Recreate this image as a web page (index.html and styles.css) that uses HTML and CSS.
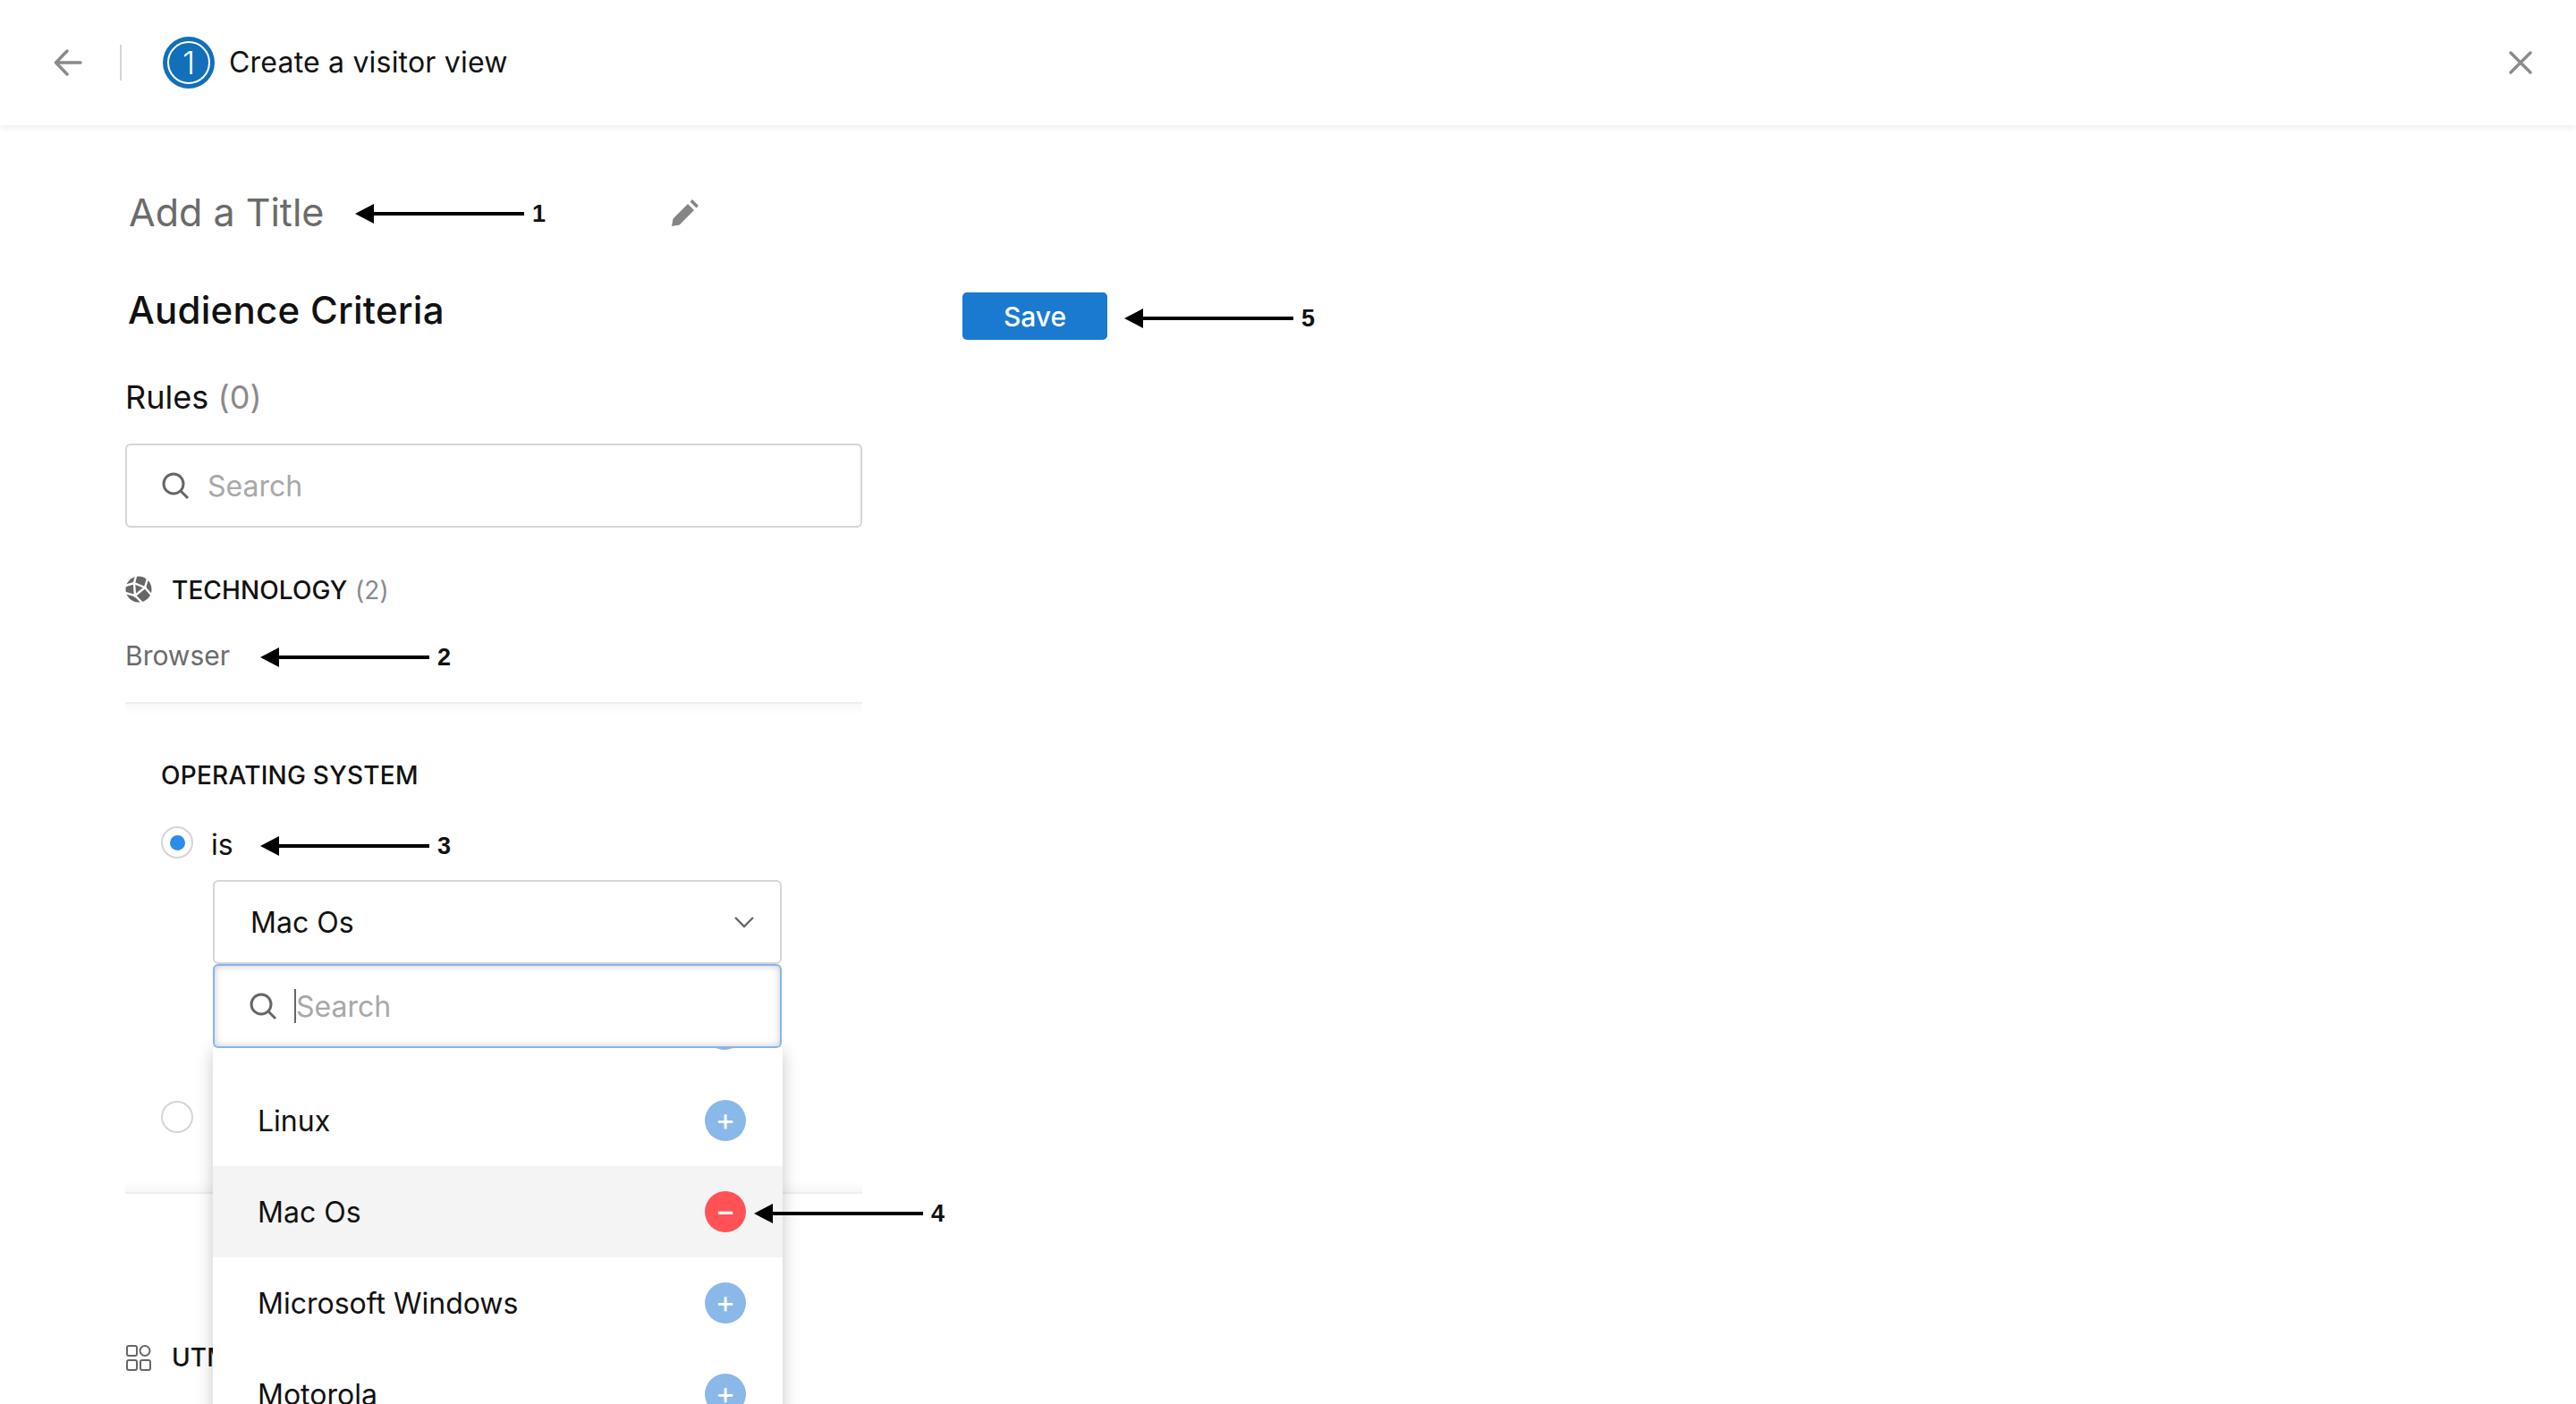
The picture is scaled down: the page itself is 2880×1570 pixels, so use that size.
FILE: index.html
```html
<!DOCTYPE html>
<html lang="en">
<head>
<meta charset="utf-8">
<title>Create a visitor view</title>
<link rel="stylesheet" href="styles.css">
</head>
<body>
<header class="topbar">
  <svg class="back" width="32" height="30" viewBox="0 0 32 30"><path d="M30 15H3M15 2 2.500 15 15 28" fill="none" stroke="#8a8a8a" stroke-width="3.400" stroke-linecap="round" stroke-linejoin="round"/></svg>
  <span class="bar-sep"></span>
  <span class="step"><span class="step-inner">1</span></span>
  <span class="bar-title">Create a visitor view</span>
  <svg class="close" width="26" height="26" viewBox="0 0 26 26"><path d="M2 2 24 24M24 2 2 24" fill="none" stroke="#8a8a8a" stroke-width="3.400" stroke-linecap="round"/></svg>
</header>

<main class="page">
  <div class="title-row">
    <span class="title">Add a Title</span>
    <svg width="32" height="32" viewBox="0 0 32 32"><path d="M1 31 2.500 22.500 19 6 26 13 9.500 29.500Z M21.500 3.500 24 1 31 8 28.500 10.500Z" fill="#858585"/></svg>
  </div>
  <div class="criteria-row">
    <h1 class="criteria">Audience Criteria</h1>
    <button class="save">Save</button>
  </div>
  <h2 class="rules">Rules <span class="muted">(0)</span></h2>
  <div class="field search-main">
    <svg class="lens" width="32" height="32" viewBox="0 0 32 32"><circle cx="14" cy="14" r="11" fill="none" stroke="#666" stroke-width="3"/><path d="M22 22 30 30" stroke="#666" stroke-width="3"/></svg>
    <span class="placeholder">Search</span>
  </div>
  <div class="group-head tech">
    <svg width="30" height="30" viewBox="0 0 30 30"><circle cx="15" cy="15" r="14.500" fill="#666"/><path d="M10 8 22 13 11 22ZM10 8 12 0M10 8 0 11M22 13 25 3M22 13 29 21M11 22 0 19M11 22 19 30" fill="none" stroke="#fff" stroke-width="2.400"/></svg>
    <span>TECHNOLOGY <span class="muted">(2)</span></span>
  </div>
  <div class="browser">Browser</div>
  <div class="rule-fade down"></div>

  <section class="os">
    <h3 class="os-title">OPERATING SYSTEM</h3>
    <div class="radio-row">
      <span class="radio on"></span>
      <span class="is">is</span>
    </div>
    <div class="picker">
      <div class="field select">
        <span>Mac Os</span>
        <svg width="24" height="14" viewBox="0 0 24 14"><path d="M2 2 12 12 22 2" fill="none" stroke="#666" stroke-width="2.400"/></svg>
      </div>
      <div class="field search-focus">
        <svg class="lens" width="32" height="32" viewBox="0 0 32 32"><circle cx="14" cy="14" r="11" fill="none" stroke="#666" stroke-width="3"/><path d="M22 22 30 30" stroke="#666" stroke-width="3"/></svg>
        <span class="caret"></span><span class="placeholder">Search</span>
      </div>
      <div class="menu">
        <span class="peek"></span>
        <div class="option"><span>Linux</span><span class="pill add">+</span></div>
        <div class="option current"><span>Mac Os</span><span class="pill remove">−</span></div>
        <div class="option"><span>Microsoft Windows</span><span class="pill add">+</span></div>
        <div class="option"><span>Motorola</span><span class="pill add">+</span></div>
      </div>
    </div>
    <div class="radio-row second"><span class="radio"></span></div>
  </section>
  <div class="rule-fade up"></div>

  <div class="group-head utm">
    <svg width="30" height="30" viewBox="0 0 30 30"><g fill="none" stroke="#666" stroke-width="2"><rect x="2" y="2" width="11" height="11" rx="2"/><circle cx="22" cy="7.500" r="5.500"/><rect x="2" y="18" width="11" height="11" rx="2"/><rect x="17" y="18" width="11" height="11" rx="2"/></g></svg>
    <span>UTM</span>
  </div>
</main>

<div class="note note-1"><span class="note-head"></span><span class="note-line"></span><b>1</b></div>
<div class="note note-2"><span class="note-head"></span><span class="note-line"></span><b>2</b></div>
<div class="note note-3"><span class="note-head"></span><span class="note-line"></span><b>3</b></div>
<div class="note note-4"><span class="note-head"></span><span class="note-line"></span><b>4</b></div>
<div class="note note-5"><span class="note-head"></span><span class="note-line"></span><b>5</b></div>
</body>
</html>
```
FILE: styles.css
```css
* { box-sizing: border-box; }
html, body { margin: 0; height: 1570px; overflow: hidden; background: #fff; }
body { position: relative; font-family: Inter, "Liberation Sans", sans-serif; color: #111; }

.topbar { height: 140px; display: flex; align-items: center; padding: 0 49px 0 60px; box-shadow: 0 2px 8px rgba(0, 0, 0, .09); position: relative; }
.back { flex: none; }
.bar-sep { width: 2px; height: 40px; background: #d4d4d4; margin-left: 42px; }
.step { width: 58px; height: 58px; border-radius: 50%; background: #126fb9; margin-left: 46px; display: flex; align-items: center; justify-content: center; }
.step-inner { width: 48px; height: 48px; border-radius: 50%; border: 2px solid #fff; color: #fff; font-size: 36px; font-weight: 300; display: flex; align-items: center; justify-content: center; }
.bar-title { font-size: 32px; letter-spacing: .2px; margin: -2px 0 0 16px; }
.close { margin-left: auto; }

.page { padding-left: 140px; }
.title-row { width: 642px; height: 60px; margin-top: 68px; display: flex; align-items: center; justify-content: space-between; padding-left: 4px; }
.title { font-size: 43px; color: #6b6b6b; margin-top: -2px; }
.criteria-row { display: flex; align-items: center; height: 60px; margin-top: 55px; }
.criteria { width: 936px; margin: 0; padding-left: 3px; font-size: 42px; font-weight: 450; letter-spacing: .25px; line-height: 60px; position: relative; top: -6px; }
.save { width: 162px; height: 53px; margin-top: 1px; border: 0; border-radius: 5px; background: #1a7ad0; color: #fff; font: 450 30px Inter, sans-serif; padding: 0; }
.rules { margin: 41px 0 0; font-size: 36px; font-weight: 400; letter-spacing: .05px; line-height: 40px; }
.muted { color: #8a8a8a; }

.field { display: flex; align-items: center; background: #fff; border: 2px solid #d5d5d5; border-radius: 6px; }
.search-main { width: 824px; height: 94px; margin-top: 32px; padding-left: 38px; }
.lens { flex: none; }
.placeholder { font-size: 32px; color: #a8a8a8; }
.search-main .placeholder { margin-left: 20px; }

.group-head { display: flex; align-items: center; gap: 22px; font-size: 28px; font-weight: 450; letter-spacing: .1px; line-height: 40px; }
.group-head .muted { font-weight: 400; margin-left: 1px; }
.tech { margin-top: 50px; }
.tech svg { margin-top: -2px; }
.browser { margin-top: 33px; font-size: 30px; line-height: 40px; color: #6b6b6b; }
.rule-fade { width: 824px; height: 14px; }
.rule-fade.down { margin-top: 32px; border-top: 2px solid #eee; background: linear-gradient(#f8f8f8, #fff); }
.rule-fade.up { margin-top: 50px; border-bottom: 2px solid #eee; background: linear-gradient(#fff, #f7f7f7); }

.os { padding-left: 40px; }
.os-title { margin: 48px 0 0; font-size: 28px; font-weight: 450; letter-spacing: .25px; line-height: 40px; }
.radio-row { display: flex; align-items: center; height: 40px; margin-top: 37px; gap: 20px; }
.radio { width: 36px; height: 36px; border-radius: 50%; border: 2px solid #d5d5d5; background: #fff; display: flex; align-items: center; justify-content: center; position: relative; top: -2px; }
.radio.on::after { content: ""; width: 17px; height: 17px; border-radius: 50%; background: #2a8de8; }
.is { font-size: 32px; margin-top: 1px; }

.picker { position: relative; width: 636px; margin: 20px 0 0 58px; z-index: 2; }
.select { height: 94px; justify-content: space-between; padding: 0 28px 0 40px; font-size: 32px; }
.search-focus { height: 94px; margin-top: 0; border-color: #86b5ea; padding-left: 38px; box-shadow: inset 0 0 8px rgba(0, 0, 0, .22); position: relative; z-index: 2; }
.search-focus .caret { width: 2px; height: 38px; background: #666; margin-left: 19px; }

.menu { position: absolute; left: 0; top: 187px; width: 637px; padding-top: 31px; background: #fff; box-shadow: 0 4px 18px rgba(0, 0, 0, .22); height: 520px; }
.peek { position: absolute; right: 42px; top: -22px; width: 46px; height: 25px; border-radius: 0 0 23px 23px; background: #8ab8e8; }
.option { height: 102px; display: flex; align-items: center; justify-content: space-between; padding: 0 41px 0 50px; font-size: 32px; }
.current { background: #f4f4f4; }
.pill { width: 46px; height: 46px; border-radius: 50%; color: #fff; font-size: 34px; font-weight: 400; line-height: 44px; text-align: center; flex: none; }
.add { background: #8ab8e8; }
.remove { background: #ff5156; font-weight: 500; }

.second { margin-top: 59px; }
.utm { margin-top: 163px; }

.note { position: absolute; display: flex; align-items: center; height: 24px; z-index: 5; }
.note-head { width: 0; height: 0; border-style: solid; border-width: 11px 21px 11px 0; border-color: transparent #000 transparent transparent; }
.note-line { width: 168px; height: 4px; background: #000; }
.note b { margin-left: 9px; font: 700 27px "Liberation Sans", Arial, sans-serif; }
.note-1 { left: 397px; top: 227px; }
.note-2 { left: 291px; top: 723px; }
.note-3 { left: 291px; top: 934px; }
.note-4 { left: 843px; top: 1345px; }
.note-5 { left: 1257px; top: 344px; }
```
